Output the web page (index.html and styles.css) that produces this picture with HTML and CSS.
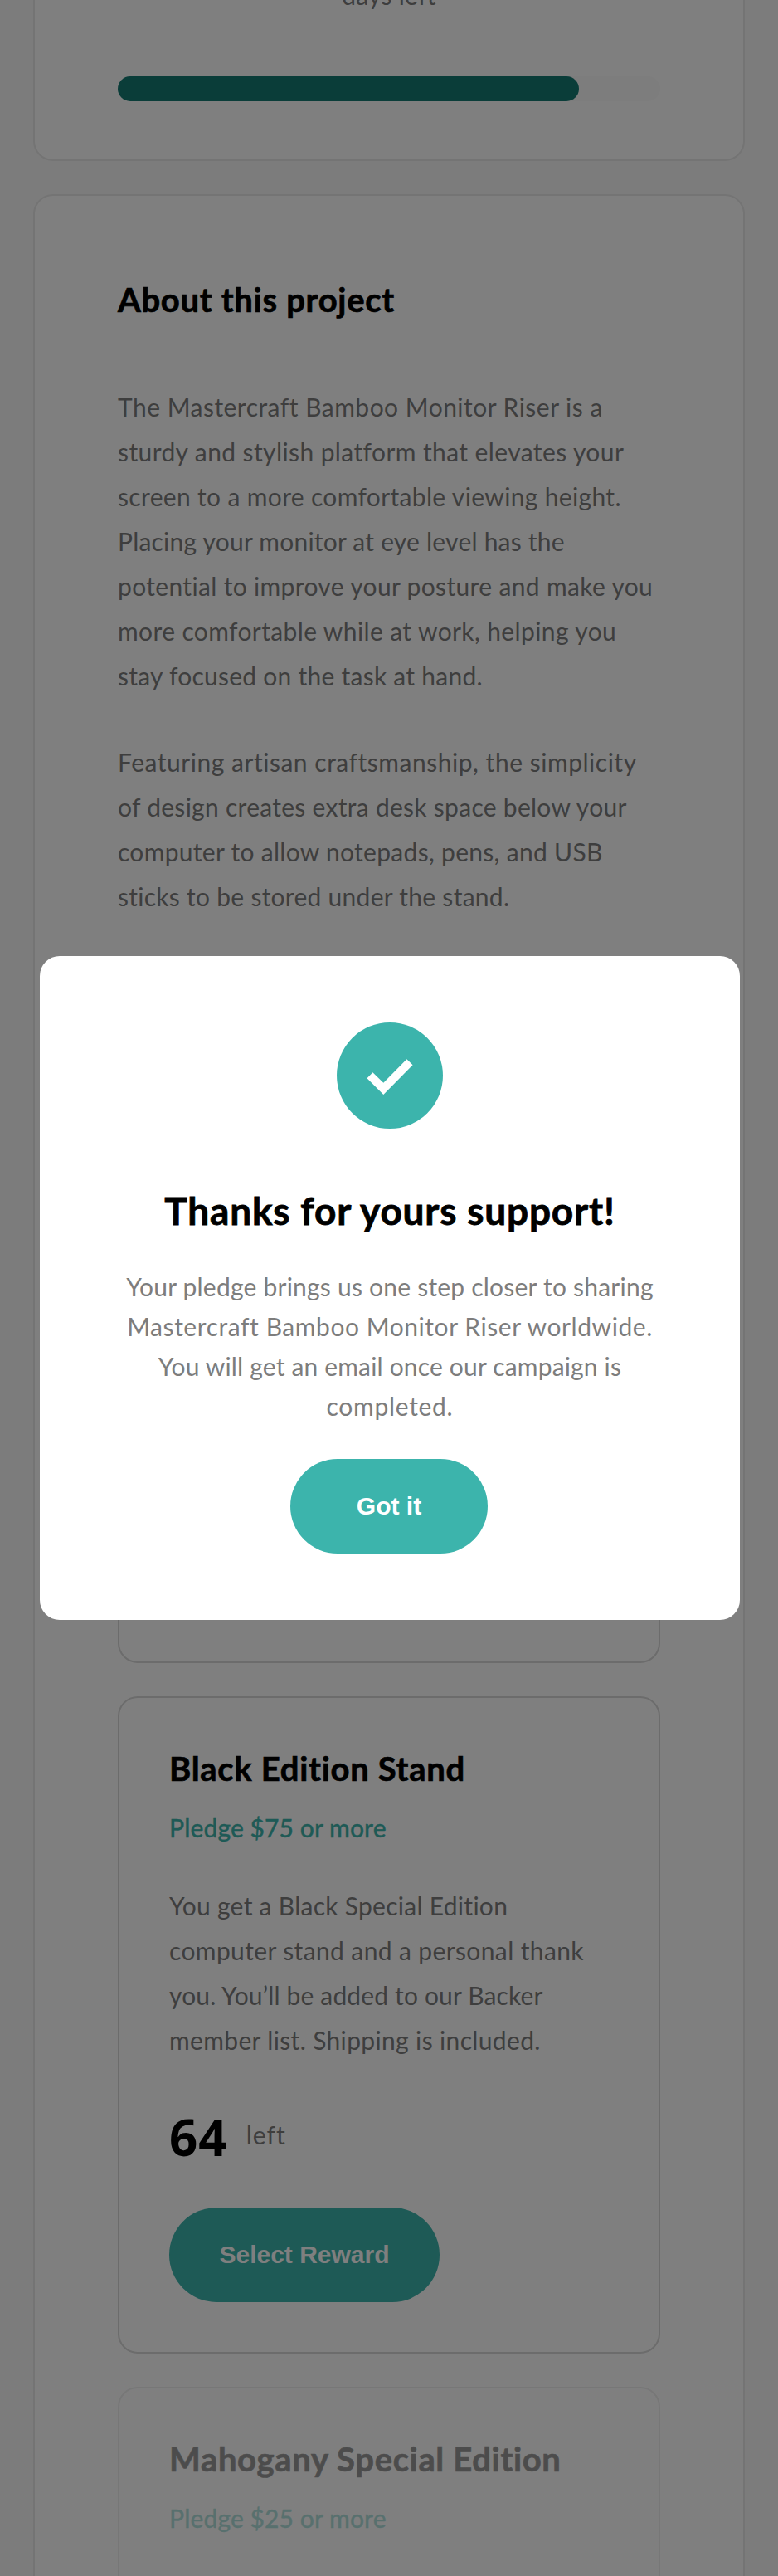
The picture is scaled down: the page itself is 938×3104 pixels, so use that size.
FILE: index.html
```
<!DOCTYPE html>
<html lang="en">
<head>
<meta charset="utf-8">
<title>Mastercraft Bamboo Monitor Riser</title>
<link rel="stylesheet" href="styles.css">
</head>
<body>
<main class="page">
  <section class="card stats">
    <p class="text stats-label">days left</p>
    <div class="progress"><div class="progress-bar" style="width: 85%"></div></div>
  </section>
  <section class="card about">
    <h2 class="heading">About this project</h2>
    <p class="text intro">
      <span class="line">The Mastercraft Bamboo Monitor Riser is a</span>
      <span class="line">sturdy and stylish platform that elevates your</span>
      <span class="line">screen to a more comfortable viewing height.</span>
      <span class="line">Placing your monitor at eye level has the</span>
      <span class="line">potential to improve your posture and make you</span>
      <span class="line">more comfortable while at work, helping you</span>
      <span class="line">stay focused on the task at hand.</span>
    </p>
    <p class="text features">
      <span class="line">Featuring artisan craftsmanship, the simplicity</span>
      <span class="line">of design creates extra desk space below your</span>
      <span class="line">computer to allow notepads, pens, and USB</span>
      <span class="line">sticks to be stored under the stand.</span>
    </p>
    <div class="rewards">
      <article class="reward"></article>
      <article class="reward">
        <h3 class="heading">Black Edition Stand</h3>
        <p class="pledge">Pledge $75 or more</p>
        <p class="text reward-text">
          <span class="line">You get a Black Special Edition</span>
          <span class="line">computer stand and a personal thank</span>
          <span class="line">you. You’ll be added to our Backer</span>
          <span class="line">member list. Shipping is included.</span>
        </p>
        <div class="stock"><strong class="stock-count">64</strong><span class="text stock-label">left</span></div>
        <button class="button select" type="button">Select Reward</button>
      </article>
      <article class="reward sold-out">
        <h3 class="heading mahogany">Mahogany Special Edition</h3>
        <p class="pledge">Pledge $25 or more</p>
      </article>
    </div>
  </section>
</main>
<div class="overlay">
  <div class="modal">
    <svg class="check" viewBox="0 0 128 128" aria-hidden="true">
      <circle cx="64" cy="64" r="64" fill="#3cb4ac"/>
      <path d="M36.5 67.3 43.4 60.2 56.3 72.8 84.4 44.2 91.6 51.3 56.3 87Z" fill="#fff"/>
    </svg>
    <h2 class="modal-title">Thanks for yours support!</h2>
    <p class="text modal-text">
      <span class="line">Your pledge brings us one step closer to sharing</span>
      <span class="line">Mastercraft Bamboo Monitor Riser worldwide.</span>
      <span class="line">You will get an email once our campaign is</span>
      <span class="line">completed.</span>
    </p>
    <button class="button confirm" type="button">Got it</button>
  </div>
</div>
</body>
</html>
```
FILE: styles.css
```
* { box-sizing: border-box; margin: 0; padding: 0; }
html, body { height: 3104px; overflow: hidden; }
body { font-family: Lato, "Noto Sans", sans-serif; background: #f8f8f8; color: #000; }

.page { height: 3104px; padding: 0 40px; overflow: hidden; display: flex; flex-direction: column; gap: 40px; }
.card { flex: none; background: #fff; border: 2px solid #e8e8e8; border-radius: 24px; padding: 100px; }
.stats { margin-top: -64px; padding: 29px 100px 70px; }
.stats-label { text-align: center; letter-spacing: .5px; }
.progress { height: 30px; margin-top: 71px; border-radius: 15px; background: #fafafa; }
.progress-bar { height: 30px; border-radius: 15px; background: #147a73; }

.heading { font-size: 40px; line-height: 50px; font-weight: 700; letter-spacing: .7px; -webkit-text-stroke: .7px currentColor; white-space: nowrap; }
.mahogany { letter-spacing: .65px; }
.text { font-size: 30px; line-height: 54px; color: #7d7d7d; letter-spacing: .25px; }
.line { display: block; white-space: nowrap; }
.intro { margin-top: 77px; }
.features { margin-top: 50px; }

.intro .line:nth-child(1) { letter-spacing: .48px; }
.intro .line:nth-child(2) { letter-spacing: .4px; }
.intro .line:nth-child(3) { letter-spacing: .34px; }
.intro .line:nth-child(4) { letter-spacing: .22px; }
.intro .line:nth-child(5) { letter-spacing: .34px; }
.intro .line:nth-child(6) { letter-spacing: .38px; }
.intro .line:nth-child(7) { letter-spacing: .25px; }
.features .line:nth-child(1) { letter-spacing: .52px; }
.features .line:nth-child(2) { letter-spacing: .28px; }
.features .line:nth-child(3) { letter-spacing: .3px; }
.features .line:nth-child(4) { letter-spacing: .27px; }
.reward-text .line:nth-child(1) { letter-spacing: .28px; }
.reward-text .line:nth-child(2) { letter-spacing: .38px; }
.reward-text .line:nth-child(3) { letter-spacing: .15px; }
.reward-text .line:nth-child(4) { letter-spacing: .35px; }
.modal-text .line:nth-child(1) { letter-spacing: .22px; }
.modal-text .line:nth-child(2) { letter-spacing: .56px; }
.modal-text .line:nth-child(3) { letter-spacing: .17px; }
.modal-text .line:nth-child(4) { letter-spacing: .7px; }

.rewards { display: flex; flex-direction: column; gap: 40px; margin-top: 105px; }
.reward { flex: none; height: 792px; padding: 60px; border: 2px solid #d8d8d8; border-radius: 24px; }
.sold-out { opacity: .4; }
.pledge { margin-top: 19px; font-size: 30px; line-height: 54px; font-weight: 500; letter-spacing: .1px; -webkit-text-stroke: .3px currentColor; color: #3cb4ac; }
.reward-text { margin-top: 40px; }
.stock { display: flex; align-items: center; gap: 22px; margin-top: 54px; }
.stock-count { font-family: "Open Sans", "Noto Sans", sans-serif; font-size: 60px; line-height: 72px; font-weight: 700; letter-spacing: 1px; }
.stock-label { margin-bottom: 6px; letter-spacing: 1px; }

.button { height: 114px; border: 0; border-radius: 57px; background: #3cb4ac; color: #fff; font: 700 30px "Liberation Sans", Arial, sans-serif; }
.select { width: 326px; margin-top: 49px; }
.confirm { width: 238px; margin: 40px 2px 0 0; }

.overlay { position: absolute; inset: 0; padding: 0 46px 0 48px; display: flex; align-items: center; justify-content: center; background: rgba(0, 0, 0, .5); }
.modal { width: 844px; height: 800px; padding: 80px 0; border-radius: 24px; background: #fff; display: flex; flex-direction: column; align-items: center; text-align: center; }
.check { width: 128px; height: 128px; flex: none; }
.modal-title { margin-top: 71px; font-size: 46px; line-height: 55px; font-weight: 700; letter-spacing: .8px; -webkit-text-stroke: .8px currentColor; white-space: nowrap; }
.modal-text { margin-top: 40px; line-height: 48px; }
```
